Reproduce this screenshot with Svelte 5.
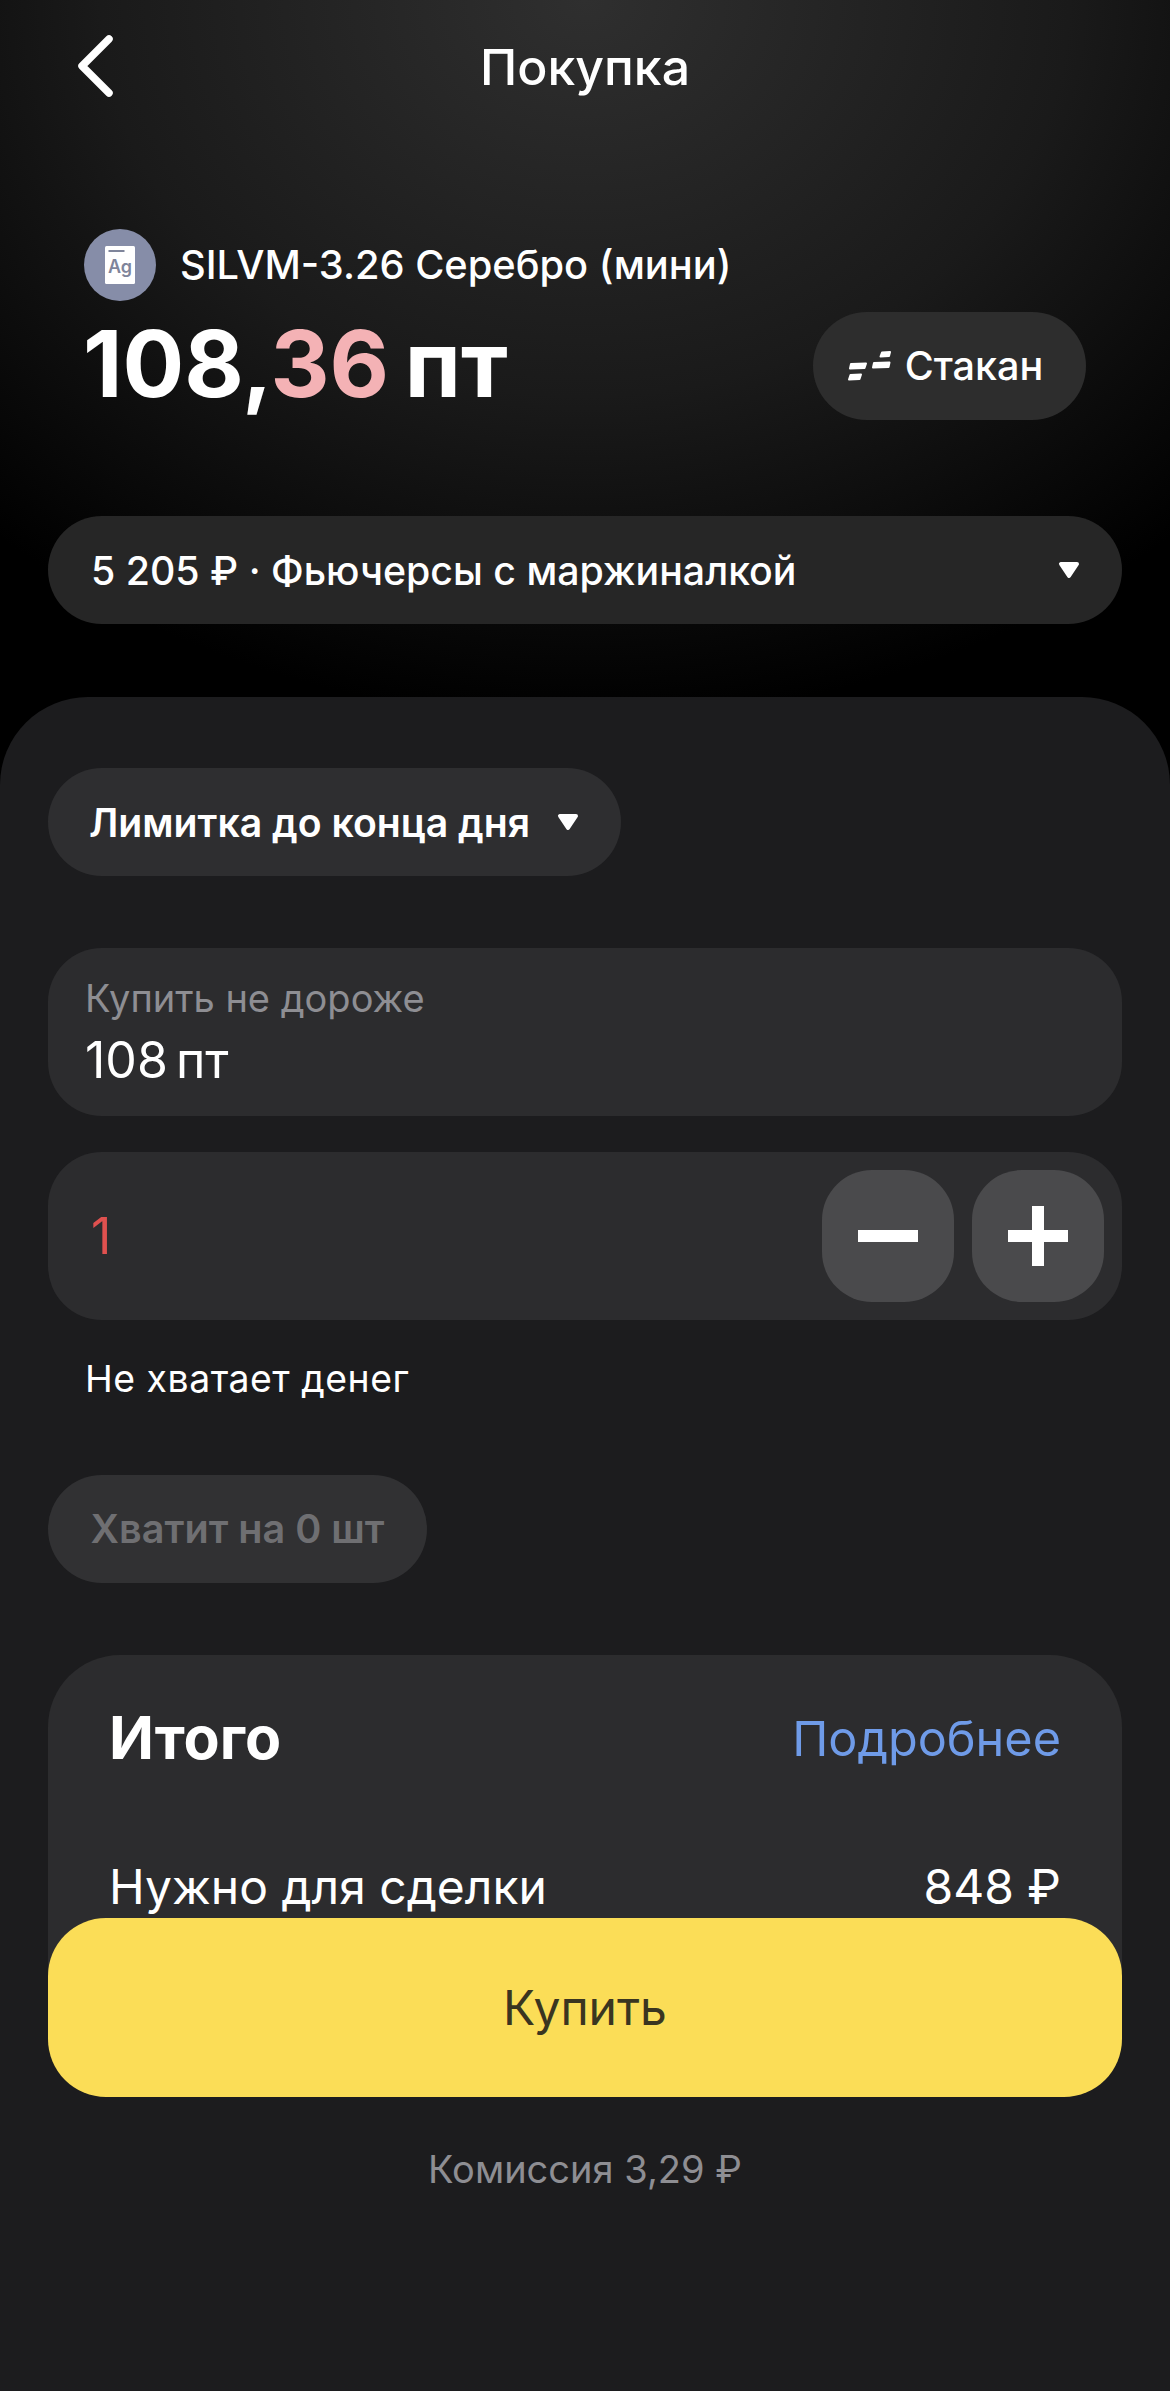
<script>
  const summary = { title: "Итого", link: "Подробнее", label: "Нужно для сделки", value: "848 ₽" };
</script>

{#snippet caret()}
  <svg class="caret" width="22" height="18" viewBox="0 0 22 18">
    <path d="M3 3 H19 L11 15 Z" fill="#fff" stroke="#fff" stroke-width="4" stroke-linejoin="round" />
  </svg>
{/snippet}

<div class="page">
  <header class="top">
    <div class="nav">
      <svg class="back" width="40" height="62" viewBox="0 0 40 62" fill="none">
        <path d="M33 4 L6 31 L33 58" stroke="#fff" stroke-width="7.5" stroke-linecap="round" stroke-linejoin="round" />
      </svg>
      <h1>Покупка</h1>
    </div>

    <div class="instrument">
      <div class="logo">
        <svg width="30" height="38" viewBox="0 0 30 38">
          <rect width="30" height="38" rx="1.5" fill="#fff" />
          <rect x="3.5" y="4" width="16" height="2" fill="#7f859b" />
          <text x="15" y="26.5" text-anchor="middle" class="ag">Ag</text>
        </svg>
      </div>
      <span>SILVM-3.26 Серебро (мини)</span>
    </div>

    <div class="price-row">
      <div class="price">108,<span class="pink">36</span> пт</div>
      <button class="glass">
        <svg width="44" height="30" viewBox="0 0 44 30" fill="#fff" stroke="#fff" stroke-width="2" stroke-linejoin="round">
          <path d="M34 1.5 L42 1 L41 5 L32.5 5.5 Z" />
          <path d="M26 12 L41.5 11.5 L40.5 16 L25 16.5 Z" />
          <path d="M3 13 L18 12.5 L16.5 17 L2 17.5 Z" />
          <path d="M2.5 24 L13 23.5 L11.5 28 L1 28.5 Z" />
        </svg>
        Стакан
      </button>
    </div>

    <button class="account">
      <span>5 205 ₽ · Фьючерсы с маржиналкой</span>
      {@render caret()}
    </button>
  </header>

  <main class="sheet">
    <button class="pill order">
      <span>Лимитка до конца дня</span>
      {@render caret()}
    </button>

    <div class="field">
      <div class="field-label">Купить не дороже</div>
      <div class="field-value">108 пт</div>
    </div>

    <div class="qty">
      <span class="qty-value">1</span>
      <div class="steppers">
        <button class="step" aria-label="Меньше"><i class="h"></i></button>
        <button class="step" aria-label="Больше"><i class="h"></i><i class="v"></i></button>
      </div>
    </div>

    <p class="hint">Не хватает денег</p>

    <button class="pill muted">Хватит на 0 шт</button>

    <section class="card">
      <div class="card-head">
        <h2>{summary.title}</h2>
        <a href="#/details">{summary.link}</a>
      </div>
      <div class="card-row">
        <span>{summary.label}</span>
        <span>{summary.value}</span>
      </div>
    </section>

    <footer class="bottom">
      <button class="buy">Купить</button>
      <p class="fee">Комиссия 3,29 ₽</p>
    </footer>
  </main>
</div>

<style>
  :global(body) {
    margin: 0;
    background: #000;
  }
  .page {
    position: relative;
    width: 1170px;
    height: 2391px;
    overflow: hidden;
    font-family: Inter, "Noto Sans", sans-serif;
    color: #fff;
    background: radial-gradient(ellipse 880px 720px at 50% 0, #2f2f2f 0%, #1a1a1a 55%, #000 100%);
  }
  button {
    font-family: inherit;
    border: 0;
    color: inherit;
    padding: 0;
  }
  .top {
    height: 697px;
    padding: 0 48px;
    box-sizing: border-box;
  }
  .nav {
    position: relative;
    height: 134px;
    display: flex;
    align-items: center;
    justify-content: center;
  }
  .back {
    position: absolute;
    left: 28px;
    top: 35px;
  }
  h1 {
    margin: 0;
    font-size: 50px;
    font-weight: 500;
  }
  .instrument {
    display: flex;
    align-items: center;
    gap: 24px;
    margin: 95px 0 0 36px;
    font-size: 39.8px;
    font-weight: 500;
  }
  .instrument span {
    position: relative;
    top: -1px;
  }
  .logo {
    width: 72px;
    height: 72px;
    border-radius: 50%;
    background: #868da8;
    display: flex;
    align-items: center;
    justify-content: center;
  }
  .ag {
    font-size: 18px;
    font-weight: 600;
    fill: #7f859b;
  }
  .price-row {
    display: flex;
    align-items: center;
    justify-content: space-between;
    margin: 11px 36px 0 35px;
  }
  .price {
    font-size: 91.6px;
    font-weight: 700;
    line-height: 104px;
    word-spacing: -6px;
    padding-bottom: 4px;
  }
  .pink {
    color: #f4b2b5;
  }
  .glass {
    width: 273px;
    height: 108px;
    border-radius: 54px;
    background: #2d2d2d;
    display: flex;
    align-items: center;
    justify-content: center;
    gap: 13px;
    padding-right: 8px;
    box-sizing: border-box;
    font-size: 39.6px;
    font-weight: 500;
    line-height: 44px;
  }
  .account {
    width: 100%;
    height: 108px;
    margin-top: 96px;
    border-radius: 54px;
    background: #262626;
    display: flex;
    align-items: center;
    justify-content: space-between;
    padding: 0 42px 0 43px;
    box-sizing: border-box;
    font-size: 39.3px;
    font-weight: 500;
  }
  .caret {
    display: block;
    flex: none;
  }
  .sheet {
    position: relative;
    height: 1694px;
    box-sizing: border-box;
    padding: 71px 48px 0;
    background: #1c1c1e;
    border-radius: 88px 88px 0 0;
  }
  .pill {
    height: 108px;
    border-radius: 54px;
    background: #2e2e30;
    display: flex;
    align-items: center;
    font-size: 39.2px;
    font-weight: 600;
    padding: 0 42px 0 41px;
  }
  .order {
    width: 573px;
    justify-content: space-between;
    box-sizing: border-box;
  }
  .field {
    height: 168px;
    margin-top: 72px;
    border-radius: 54px;
    background: #2c2c2e;
    padding: 28px 37px 0;
    box-sizing: border-box;
  }
  .field-label {
    font-size: 38px;
    line-height: 44px;
    color: #8e8e93;
  }
  .field-value {
    margin-top: 9px;
    font-size: 50px;
    line-height: 62px;
    word-spacing: -6px;
  }
  .qty {
    height: 168px;
    margin-top: 36px;
    border-radius: 54px;
    background: #2c2c2e;
    display: flex;
    align-items: center;
    justify-content: space-between;
    padding: 0 18px 0 43px;
  }
  .qty-value {
    font-size: 50px;
    color: #e0514f;
  }
  .steppers {
    display: flex;
    gap: 18px;
  }
  .step {
    position: relative;
    width: 132px;
    height: 132px;
    border-radius: 50px;
    background: #4a4a4c;
  }
  .step i {
    position: absolute;
    background: #fff;
  }
  .h {
    left: 36px;
    top: 60px;
    width: 60px;
    height: 12px;
  }
  .v {
    left: 60px;
    top: 36px;
    width: 12px;
    height: 60px;
  }
  .hint {
    margin: 37px 0 0 37px;
    font-size: 37.4px;
    line-height: 44px;
    letter-spacing: 0.5px;
  }
  .muted {
    width: 379px;
    margin-top: 74px;
    background: #313133;
    color: #6f6f72;
    justify-content: center;
    padding: 0;
    box-sizing: border-box;
    font-size: 39.6px;
  }
  .card {
    height: 500px;
    margin-top: 72px;
    border-radius: 72px 72px 0 0;
    background: #2c2c2e;
    padding: 50px 61px 0;
    box-sizing: border-box;
  }
  .card-head,
  .card-row {
    display: flex;
    align-items: center;
    justify-content: space-between;
  }
  h2 {
    margin: 0;
    font-size: 59px;
    line-height: 66px;
    font-weight: 700;
  }
  .card-head a {
    font-size: 48.6px;
    color: #6f9be8;
    text-decoration: none;
  }
  .card-row {
    margin-top: 86px;
    font-size: 48px;
  }
  .bottom {
    position: absolute;
    left: 0;
    right: 0;
    top: 1221px;
    bottom: 0;
    padding: 0 48px;
    background: linear-gradient(#1c1c1e00 0, #1c1c1e00 90px, #1c1c1e 90px);
  }
  .buy {
    display: block;
    width: 100%;
    height: 179px;
    border-radius: 58px;
    background: #fbdd57;
    color: #3a3520;
    font-size: 48px;
  }
  .fee {
    margin: 49px 0 0;
    text-align: center;
    font-size: 38px;
    color: #8e8e93;
  }
</style>
